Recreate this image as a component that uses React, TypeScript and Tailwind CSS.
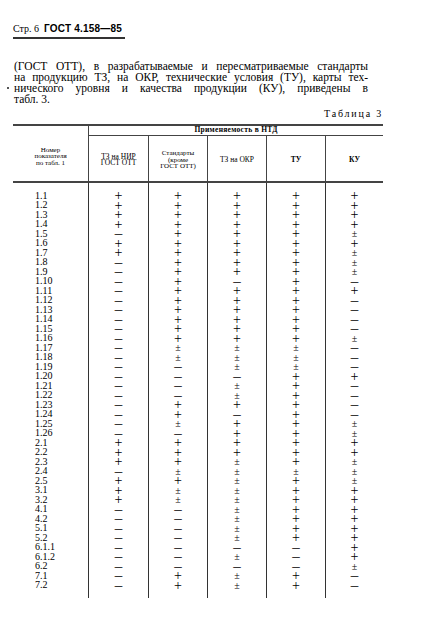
import React from "react";

type Mark = "+" | "-" | "±";

// rows: number, then marks for ТЗ на НИР / Стандарты / ТЗ на ОКР / ТУ / КУ
const rows: [string, string][] = [
  ["1.1", "+++++"],
  ["1.2", "+++++"],
  ["1.3", "+++++"],
  ["1.4", "+++++"],
  ["1.5", "-+++±"],
  ["1.6", "+++++"],
  ["1.7", "++++±"],
  ["1.8", "-+++±"],
  ["1.9", "-+++±"],
  ["1.10", "-+-+-"],
  ["1.11", "-++++"],
  ["1.12", "-+++-"],
  ["1.13", "-+++-"],
  ["1.14", "-+++-"],
  ["1.15", "-+++-"],
  ["1.16", "-+++±"],
  ["1.17", "-±±±-"],
  ["1.18", "-±±±-"],
  ["1.19", "--±±-"],
  ["1.20", "---++"],
  ["1.21", "--±+-"],
  ["1.22", "--±+-"],
  ["1.23", "-+++-"],
  ["1.24", "-+-+-"],
  ["1.25", "-±++±"],
  ["1.26", "--++±"],
  ["2.1", "+++++"],
  ["2.2", "+++++"],
  ["2.3", "++±+±"],
  ["2.4", "-±±±±"],
  ["2.5", "++±+±"],
  ["3.1", "+±±++"],
  ["3.2", "+±±++"],
  ["4.1", "--±++"],
  ["4.2", "--±++"],
  ["5.1", "--±++"],
  ["5.2", "--±++"],
  ["6.1.1", "----+"],
  ["6.1.2", "--±-+"],
  ["6.2", "----±"],
  ["7.1", "-+±+-"],
  ["7.2", "-+±+-"],
];

const serif = "font-['Liberation_Serif','DejaVu_Serif',serif]";

function Sym({ m }: { m: Mark }) {
  if (m === "+") return <span className="text-[14px] leading-[9.5px]">+</span>;
  if (m === "±") return <span className="text-[10px] leading-[9.5px]">±</span>;
  return <span className="text-[15px] leading-[9.5px]">–</span>;
}

export default function App() {
  return (
    <div className={`relative h-[633px] w-[427px] overflow-hidden bg-white text-black ${serif}`}>
      <div className="pl-[13px] pt-[23px]">
        <div className="flex w-[112px] items-end gap-[5px] border-b-2 border-[#333] pb-[2px] text-[10px] leading-[12px]">
          <span>Стр. 6</span>
          <span className="font-['Liberation_Sans',sans-serif] font-bold tracking-[0.2px]">ГОСТ 4.158—85</span>
        </div>
      </div>

      <div className="mt-[22px] w-[368px] pl-[14px] text-[11.5px] leading-[11px]">
        <div className="text-justify [text-align-last:justify]">(ГОСТ ОТТ), в разрабатываемые и пересматриваемые стандарты</div>
        <div className="text-justify [text-align-last:justify]">на продукцию ТЗ, на ОКР, технические условия (ТУ), карты тех-</div>
        <div className="relative text-justify [text-align-last:justify]">
          <span className="absolute left-[-7px] top-[4px] h-[2px] w-[2px] bg-[#555]" />
          нического уровня и качества продукции (КУ), приведены в
        </div>
        <div>табл. 3.</div>
      </div>

      <div className="mt-[3px] w-[383px] text-right text-[10px] leading-[12px] tracking-[1.8px]">Таблица 3</div>

      <div className="ml-[13px] mt-[4px] grid w-[370px] grid-cols-[75px_60px_59px_59px_59px_58px] border-t-2 border-[#444] text-[7.5px] leading-[6.5px]">
        <div className="row-span-2 flex flex-col items-center justify-center pt-[6px] text-center text-[7px]">
          <span>Номер</span>
          <span>показателя</span>
          <span>по табл. 1</span>
        </div>
        <div className="col-span-5 flex h-[10px] items-center justify-center border-b border-l border-[#444] text-[7.5px] font-bold tracking-[0.3px]">
          Применяемость в НТД
        </div>
        <div className="flex h-[45px] flex-col items-center justify-center border-l border-[#444] pt-[3px]">
          <span>ТЗ на НИР</span>
          <span>ГОСТ ОТТ</span>
        </div>
        <div className="flex h-[45px] flex-col items-center justify-center border-l border-[#444] pt-[3px] text-[7px]">
          <span>Стандарты</span>
          <span>(кроме</span>
          <span>ГОСТ ОТТ)</span>
        </div>
        <div className="flex h-[45px] items-center justify-center border-l border-[#444] pt-[3px]">ТЗ на ОКР</div>
        <div className="flex h-[45px] items-center justify-center border-l border-[#444] pt-[3px] font-bold">ТУ</div>
        <div className="flex h-[45px] items-center justify-center border-l border-[#444] pt-[3px] font-bold">КУ</div>

        <div className="col-span-6 grid grid-cols-[75px_60px_59px_59px_59px_58px] border-t-2 border-[#444]">
          <div className="pb-[8px] pl-[22px] pt-[8px] text-[10px]">
            {rows.map(([n]) => (
              <div key={n} className="flex h-[9.5px] items-center leading-none">{n}</div>
            ))}
          </div>
          {[0, 1, 2, 3, 4].map((c) => (
            <div key={c} className="border-l border-[#333] pb-[6px] pt-[8px]">
              {rows.map(([n, marks]) => (
                <div key={n} className="flex h-[9.5px] items-center justify-center">
                  <Sym m={marks[c] as Mark} />
                </div>
              ))}
            </div>
          ))}
          <div />
        </div>
      </div>
    </div>
  );
}
